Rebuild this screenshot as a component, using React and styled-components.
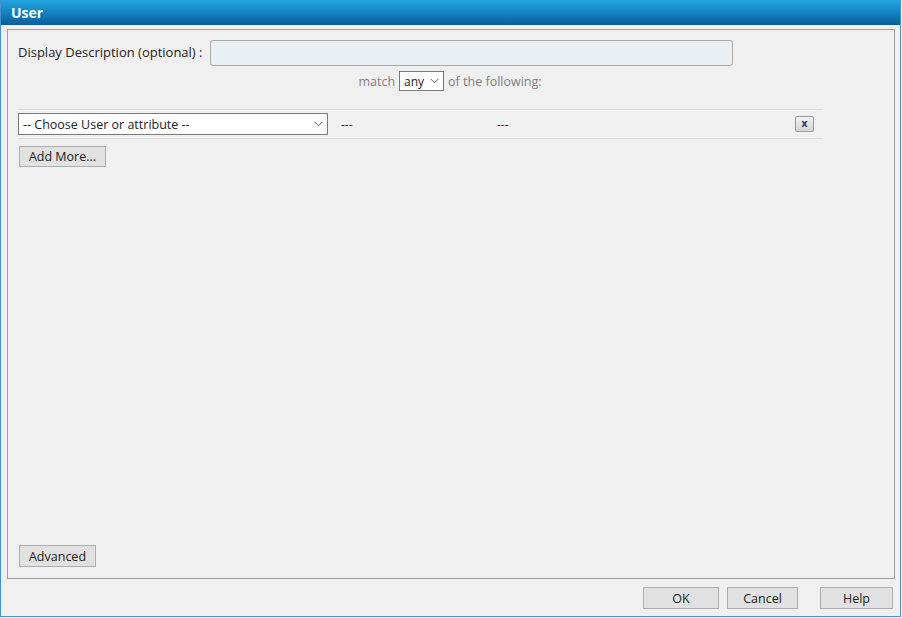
import React from 'react';
import styled, { createGlobalStyle } from 'styled-components';

const GlobalStyle = createGlobalStyle`
  * { box-sizing: border-box; }
  body {
    margin: 0;
    background: #ffffff;
    font-family: "Open Sans", "Liberation Sans", sans-serif;
    font-size: 13px;
    color: #222;
  }
`;

const Dialog = styled.div`
  width: 901px;
  height: 617px;
  display: flex;
  flex-direction: column;
  background: #f0f0f0;
  border: 1px solid #4a90cf;
  border-top: none;
`;

const TitleBar = styled.div`
  height: 25px;
  flex: none;
  display: flex;
  align-items: center;
  padding-left: 10px;
  background: linear-gradient(to bottom, #22a6de 0%, #1483c2 50%, #0b5c9b 100%);
  color: #fff;
  font-weight: 700;
  font-size: 14px;
`;

const Panel = styled.div`
  flex: 1;
  margin: 4px 5px 0 6px;
  border: 1px solid #a0a0a0;
  display: flex;
  flex-direction: column;
  padding: 10px 10px 11px 10px;
`;

const DescRow = styled.div`
  display: flex;
  align-items: center;
  gap: 7px;
`;

const Label = styled.span`
  font-size: 13px;
  color: #222;
  margin-top: -2px;
`;

const TextInput = styled.input`
  width: 523px;
  height: 26px;
  background: #e8f0f4;
  border: 1px solid #a8a8a8;
  border-radius: 3px;
  outline: none;
`;

const MatchRow = styled.div`
  display: flex;
  align-items: center;
  justify-content: center;
  gap: 4px;
  margin-top: 5px;
  width: 864px;
  color: #808080;
  font-size: 12.5px;
`;

const Select = styled.div`
  display: flex;
  align-items: center;
  justify-content: space-between;
  width: ${p => p.$w}px;
  height: ${p => p.$h}px;
  background: #fff;
  border: 1px solid ${p => p.$border || '#7a7a7a'};
  padding: 0 4px;
  color: #222;
  font-size: ${p => p.$fs || 12.5}px;
`;

const Chevron = () => (
  <svg width="9" height="6" viewBox="0 0 9 6">
    <path d="M0.5 0.8 L4.5 4.8 L8.5 0.8" fill="none" stroke="#555" strokeWidth="1" />
  </svg>
);

const ConditionRow = styled.div`
  display: flex;
  align-items: center;
  width: 805px;
  height: 30px;
  margin-top: 18px;
  border-top: 1px solid #dcdcdc;
  border-bottom: 1px solid #dcdcdc;
`;

const Dash = styled.span`
  width: ${p => p.$w}px;
  padding-left: 13px;
  font-size: 12px;
`;

const RemoveButton = styled.button`
  margin-left: auto;
  margin-right: 9px;
  width: 19px;
  height: 16px;
  padding: 0;
  border: 1px solid #9a9a9a;
  border-radius: 2px;
  background: linear-gradient(to bottom, #f2f2f2, #d4d4d4);
  color: #1b3f6e;
  font-family: "DejaVu Sans", sans-serif;
  font-weight: 700;
  font-size: 10px;
  line-height: 12px;
`;

const ButtonRow = styled.div`
  margin-top: ${p => p.$top || 0}px;
  padding-left: 1px;
`;

const Button = styled.button`
  width: ${p => p.$w}px;
  height: ${p => p.$h || 21}px;
  padding: 0;
  background: #e1e1e1;
  border: 1px solid #adadad;
  font-family: "Open Sans", "Liberation Sans", sans-serif;
  font-size: 12.5px;
  color: #222;
`;

const Spacer = styled.div`
  flex: 1;
`;

const Footer = styled.div`
  height: 37px;
  flex: none;
  display: flex;
  align-items: flex-start;
  padding-top: 8px;
  padding-left: 642px;
  gap: 8px;
`;

const FooterGap = styled.div`
  width: 6px;
`;

export default function App() {
  return (
    <>
      <GlobalStyle />
      <Dialog>
        <TitleBar>User</TitleBar>
        <Panel>
          <DescRow>
            <Label>Display Description (optional) :</Label>
            <TextInput />
          </DescRow>
          <MatchRow>
            <span>match</span>
            <Select $w={45} $h={20} $fs={12}>
              any <Chevron />
            </Select>
            <span>of the following:</span>
          </MatchRow>
          <ConditionRow>
            <Select $w={310} $h={22}>
              -- Choose User or attribute -- <Chevron />
            </Select>
            <Dash $w={156}>---</Dash>
            <Dash $w={100}>---</Dash>
            <RemoveButton>x</RemoveButton>
          </ConditionRow>
          <ButtonRow $top={7}>
            <Button $w={87}>Add More...</Button>
          </ButtonRow>
          <Spacer />
          <ButtonRow>
            <Button $w={77} $h={22}>Advanced</Button>
          </ButtonRow>
        </Panel>
        <Footer>
          <Button $w={76} $h={22}>OK</Button>
          <Button $w={71} $h={22}>Cancel</Button>
          <FooterGap />
          <Button $w={73} $h={22}>Help</Button>
        </Footer>
      </Dialog>
    </>
  );
}
